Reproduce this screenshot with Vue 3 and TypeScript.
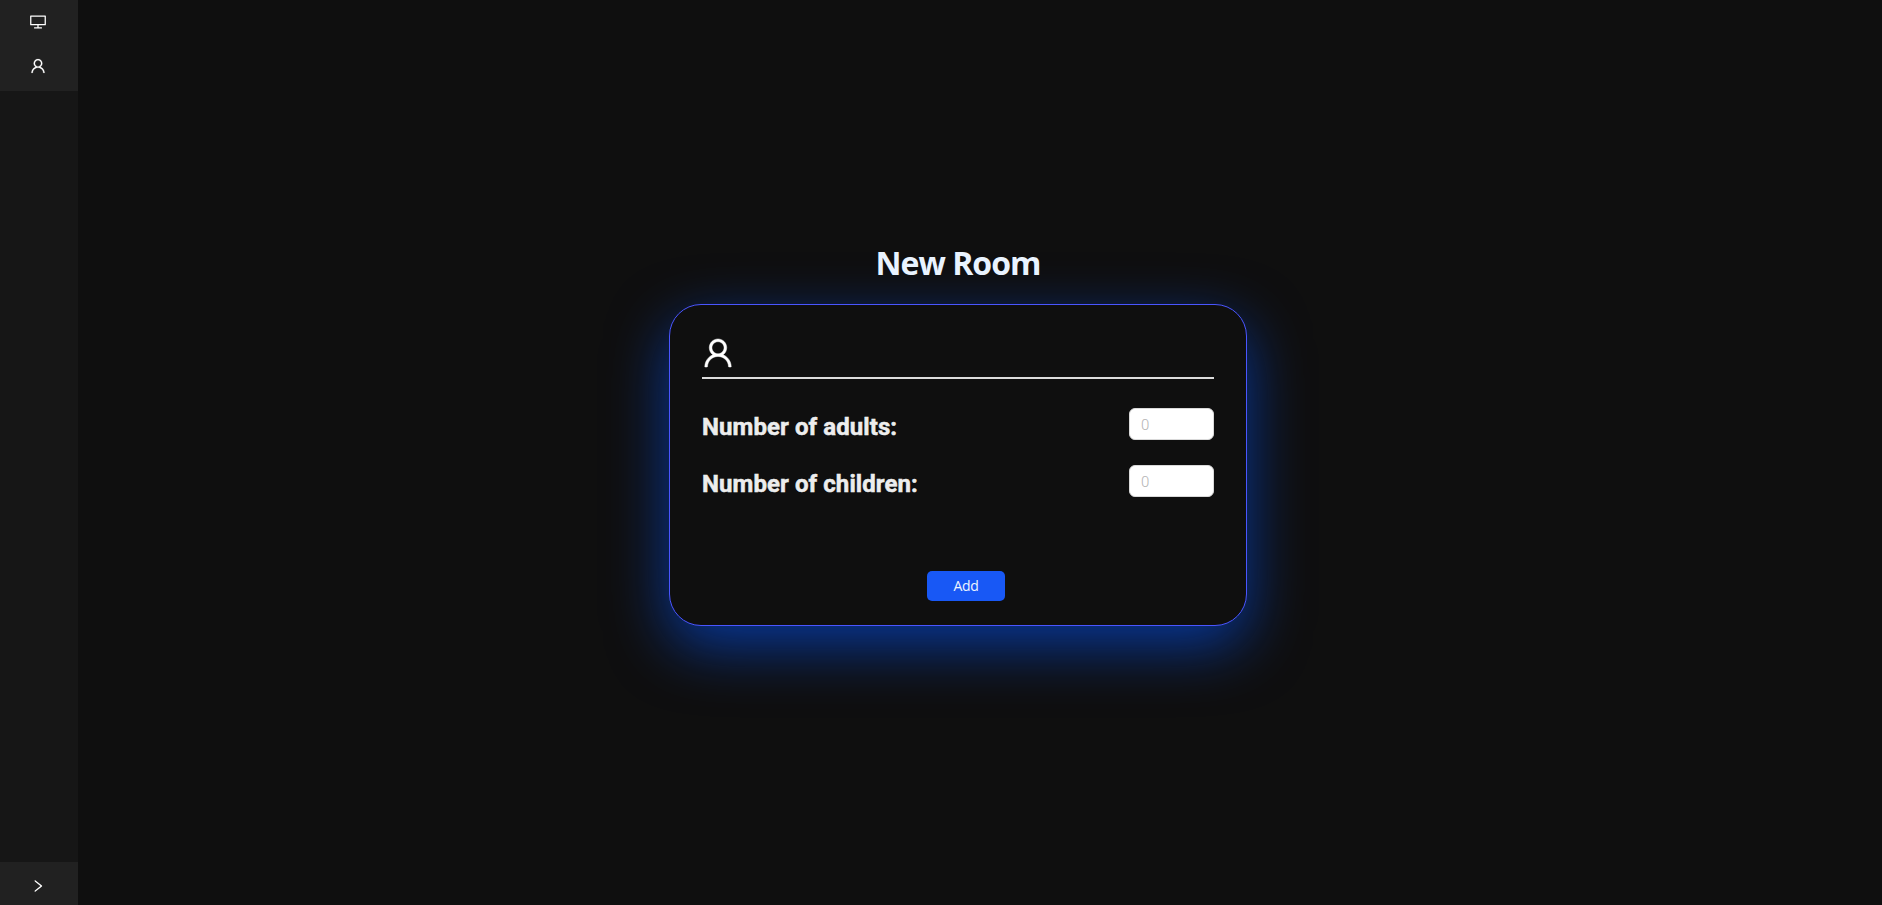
<script setup lang="ts">
import { ref } from 'vue'

interface GuestField {
  id: string
  label: string
}

const userPath =
  'M858.5 763.6a374 374 0 00-80.6-119.5 375.63 375.63 0 00-119.5-80.6c-.4-.2-.8-.3-1.2-.5C719.5 518 760 444.7 760 362c0-137-111-248-248-248S264 225 264 362c0 82.7 40.5 156 102.8 201.1-.4.2-.8.3-1.2.5-44.8 18.9-85 46-119.5 80.6a375.63 375.63 0 00-80.6 119.5A371.7 371.7 0 00136 901.8a8 8 0 008 8.2h60c4.4 0 7.9-3.5 8-7.8 2-77.2 33-149.5 87.8-204.3 56.7-56.7 132-87.9 212.2-87.9s155.5 31.2 212.2 87.9C779 752.7 810 825 812 902.2c.1 4.4 3.6 7.8 8 7.8h60a8 8 0 008-8.2c-1-47.8-10.9-94.3-29.5-138.2zM512 534c-45.9 0-89.1-17.9-121.6-50.4S340 407.9 340 362c0-45.9 17.9-89.1 50.4-121.6S466.1 190 512 190s89.1 17.9 121.6 50.4S684 316.1 684 362c0 45.9-17.9 89.1-50.4 121.6S557.9 534 512 534z'
const desktopPath =
  'M928 140H96c-17.7 0-32 14.3-32 32v496c0 17.7 14.3 32 32 32h380v112H304c-8.8 0-16 7.2-16 16v48c0 4.4 3.6 8 8 8h432c4.4 0 8-3.6 8-8v-48c0-8.8-7.2-16-16-16H548V700h380c17.7 0 32-14.3 32-32V172c0-17.7-14.3-32-32-32zm-40 488H136V212h752v416z'
const rightPath =
  'M765.7 486.8L314.9 134.7A7.97 7.97 0 00302 141v77.3c0 4.9 2.3 9.6 6.1 12.6l360 281.1-360 281.1c-3.9 3-6.1 7.7-6.1 12.6V883c0 6.7 7.7 10.4 12.9 6.3l450.8-352.1a31.96 31.96 0 000-50.4z'

const menu = [
  { name: 'Rooms', path: desktopPath },
  { name: 'Guests', path: userPath },
]

const fields: GuestField[] = [
  { id: 'adults', label: 'Number of adults:' },
  { id: 'children', label: 'Number of children:' },
]
const counts = ref<Record<string, string>>({ adults: '', children: '' })
</script>

<template>
  <div class="layout">
    <aside class="sidebar">
      <nav class="menu">
        <a v-for="item in menu" :key="item.name" class="menu-item" :aria-label="item.name">
          <svg viewBox="0 0 1024 1024" class="menu-icon"><path :d="item.path" /></svg>
        </a>
      </nav>
      <button class="trigger" type="button" aria-label="Expand">
        <svg viewBox="0 0 1024 1024" class="trigger-icon"><path :d="rightPath" /></svg>
      </button>
    </aside>
    <main class="content">
      <h1 class="title">New Room</h1>
      <form class="card" @submit.prevent>
        <header class="card-head">
          <svg viewBox="0 0 1024 1024" class="head-icon"><path :d="userPath" /></svg>
        </header>
        <div v-for="field in fields" :key="field.id" class="row">
          <label class="label" :for="field.id">{{ field.label }}</label>
          <input :id="field.id" v-model="counts[field.id]" class="input" placeholder="0" />
        </div>
        <button class="add" type="submit">Add</button>
      </form>
    </main>
  </div>
</template>

<style>
body {
  margin: 0;
  background: #0f0f0f;
}
</style>

<style scoped>
.layout {
  display: flex;
  height: 100vh;
  overflow: hidden;
  background: #0f0f0f;
  font-family: 'Open Sans', 'Noto Sans', sans-serif;
}
.sidebar {
  display: flex;
  flex-direction: column;
  justify-content: space-between;
  flex: none;
  width: 78px;
  background: #161616;
}
.menu {
  box-sizing: border-box;
  height: 91px;
  background: #212121;
}
.menu-item {
  display: flex;
  align-items: center;
  justify-content: center;
  width: 76px;
  height: 44px;
}
.menu-icon {
  width: 18px;
  height: 18px;
  fill: #fff;
}
.menu-item:last-child .menu-icon {
  stroke: #fff;
  stroke-width: 10;
}
.trigger {
  display: flex;
  align-items: center;
  width: 78px;
  height: 43px;
  padding: 5px 0 0 30px;
  border: 0;
  background: #212121;
}
.trigger-icon {
  width: 16px;
  height: 16px;
  fill: #fff;
}
.content {
  display: flex;
  flex: 1;
  flex-direction: column;
  align-items: center;
  padding: 241px 44px 0 0;
}
.title {
  position: relative;
  z-index: 1;
  margin: 0;
  height: 63px;
  color: #e9f3ff;
  font-size: 32px;
  font-weight: 700;
  letter-spacing: -1px;
  line-height: 44px;
}
.card {
  display: flex;
  flex-direction: column;
  box-sizing: border-box;
  width: 578px;
  height: 322px;
  padding: 28px 32px 0;
  border: 1px solid #4a55ff;
  border-radius: 32px;
  background: #0f0f0f;
  box-shadow: 0 20px 60px rgba(0, 84, 255, 0.58);
}
.card-head {
  display: flex;
  box-sizing: border-box;
  height: 46px;
  margin-bottom: 29px;
  border-bottom: 2px solid #dcdcdc;
}
.head-icon {
  width: 36px;
  height: 36px;
  margin: 2px 0 0 -2px;
  fill: #fff;
  stroke: #fff;
  stroke-width: 14;
}
.row {
  display: flex;
  align-items: flex-start;
  justify-content: space-between;
  height: 57px;
}
.label {
  padding-top: 4px;
  color: #ededed;
  font-family: Roboto, sans-serif;
  font-size: 24px;
  font-weight: 700;
  letter-spacing: 0.08px;
  line-height: 30px;
  -webkit-text-stroke: 0.5px #ededed;
}
.input {
  box-sizing: border-box;
  width: 85px;
  height: 32px;
  padding: 4px 11px 3px;
  border: 1px solid #d9d9d9;
  border-radius: 6px;
  background: #fff;
  color: #222;
  font-family: Roboto, sans-serif;
  font-size: 15px;
  font-weight: 300;
}
.input::placeholder {
  color: #b4b4b4;
  opacity: 1;
}
.add {
  width: 78px;
  height: 30px;
  margin: 49px 0 0 225px;
  padding: 0;
  border: 0;
  border-radius: 5px;
  background: #1858f5;
  color: #eef4ff;
  font-family: 'Open Sans', sans-serif;
  font-size: 14px;
  letter-spacing: -0.3px;
  line-height: 30px;
}
</style>
